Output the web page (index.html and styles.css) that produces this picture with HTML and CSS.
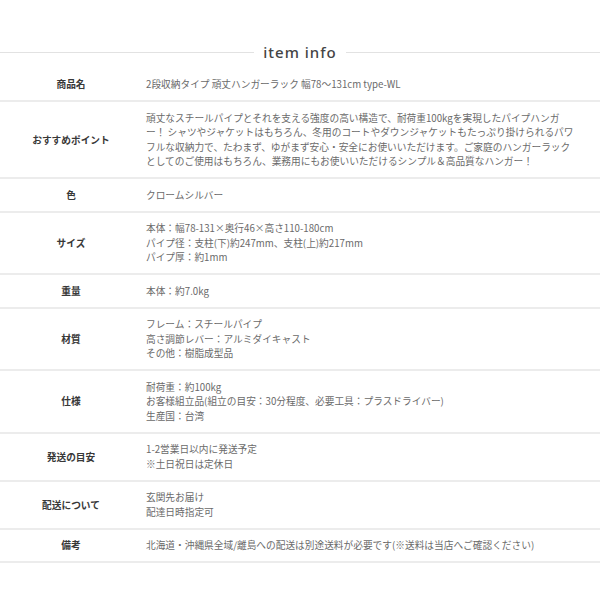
FILE: index.html
```html
<!DOCTYPE html>
<html lang="ja">
<head>
<meta charset="UTF-8">
<meta name="viewport" content="width=device-width, initial-scale=1.0">
<title>item info</title>
<link rel="stylesheet" href="styles.css">
</head>
<body>
<section class="item-info">
  <h2 class="info-title"><span>item info</span></h2>

  <dl class="info-table">
    <div class="info-row">
      <dt>商品名</dt>
      <dd>2段収納タイプ 頑丈ハンガーラック 幅78〜131cm type-WL</dd>
    </div>
    <div class="info-row">
      <dt>おすすめポイント</dt>
      <dd>頑丈なスチールパイプとそれを支える強度の高い構造で、耐荷重100kgを実現したパイプハンガ<br>ー！ シャツやジャケットはもちろん、冬用のコートやダウンジャケットもたっぷり掛けられるパワ<br>フルな収納力で、たわまず、ゆがまず安心・安全にお使いいただけます。ご家庭のハンガーラック<br>としてのご使用はもちろん、業務用にもお使いいただけるシンプル＆高品質なハンガー！</dd>
    </div>
    <div class="info-row">
      <dt>色</dt>
      <dd>クロームシルバー</dd>
    </div>
    <div class="info-row">
      <dt>サイズ</dt>
      <dd>本体：幅78-131×奥行46×高さ110-180cm<br>パイプ径：支柱(下)約247mm、支柱(上)約217mm<br>パイプ厚：約1mm</dd>
    </div>
    <div class="info-row">
      <dt>重量</dt>
      <dd>本体：約7.0kg</dd>
    </div>
    <div class="info-row">
      <dt>材質</dt>
      <dd>フレーム：スチールパイプ<br>高さ調節レバー：アルミダイキャスト<br>その他：樹脂成型品</dd>
    </div>
    <div class="info-row">
      <dt>仕様</dt>
      <dd>耐荷重：約100kg<br>お客様組立品(組立の目安：30分程度、必要工具：プラスドライバー)<br>生産国：台湾</dd>
    </div>
    <div class="info-row">
      <dt>発送の目安</dt>
      <dd>1-2営業日以内に発送予定<br>※土日祝日は定休日</dd>
    </div>
    <div class="info-row">
      <dt>配送について</dt>
      <dd>玄関先お届け<br>配達日時指定可</dd>
    </div>
    <div class="info-row">
      <dt>備考</dt>
      <dd>北海道・沖縄県全域/離島への配送は別途送料が必要です(※送料は当店へご確認ください)</dd>
    </div>
  </dl>
</section>
</body>
</html>
```

FILE: styles.css
```css
* { margin:0; padding:0; box-sizing:border-box; }
body { background:#fff; font-family:"Noto Sans CJK JP", "Noto Sans", sans-serif; color:#666; }

.item-info { padding-top:42px; }

/* TITLE */
.info-title { display:flex; align-items:center; gap:9px; font-family:"Noto Sans", sans-serif; font-weight:500; font-size:15px; line-height:20px; letter-spacing:1px; color:#444; margin-bottom:6.5px; }
.info-title::before,
.info-title::after { content:""; flex:1; height:1px; background:#e2e2e2; }

/* TABLE */
.info-row { display:grid; grid-template-columns:146px 1fr; align-items:center; border-bottom:2px solid #ececec; }
.info-row dt { padding-right:4px; text-align:center; font-size:9.7px; font-weight:700; color:#383838; }
.info-row dd { padding:8.5px 10px 8.5px 0; font-size:9.7px; line-height:14.5px; color:#6a6a6a; }
```
